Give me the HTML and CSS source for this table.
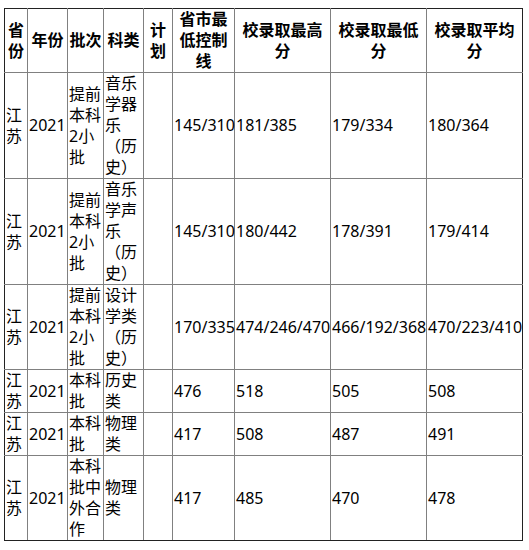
FILE: index.html
```html
<!DOCTYPE html>
<html lang="zh-CN">
<head>
<meta charset="utf-8">
<title>江苏 2021</title>
<link rel="stylesheet" href="styles.css">
</head>
<body>
<div class="page">
<table class="scores">
<colgroup>
<col class="c1"><col class="c2"><col class="c3"><col class="c4"><col class="c5"><col class="c6"><col class="c7"><col class="c8"><col class="c9">
</colgroup>
<thead>
<tr>
<th>省份</th><th>年份</th><th>批次</th><th>科类</th><th>计划</th><th>省市最低控制线</th><th>校录取最高分</th><th>校录取最低分</th><th>校录取平均分</th>
</tr>
</thead>
<tbody>
<tr>
<td>江苏</td><td>2021</td><td>提前本科2小批</td><td>音乐学器乐（历史）</td><td></td><td class="num">145/310</td><td class="num">181/385</td><td class="num">179/334</td><td class="num">180/364</td>
</tr>
<tr>
<td>江苏</td><td>2021</td><td>提前本科2小批</td><td>音乐学声乐（历史）</td><td></td><td class="num">145/310</td><td class="num">180/442</td><td class="num">178/391</td><td class="num">179/414</td>
</tr>
<tr>
<td>江苏</td><td>2021</td><td>提前本科2小批</td><td>设计学类（历史）</td><td></td><td class="num">170/335</td><td class="num">474/246/470</td><td class="num">466/192/368</td><td class="num">470/223/410</td>
</tr>
<tr>
<td>江苏</td><td>2021</td><td>本科批</td><td>历史类</td><td></td><td class="num">476</td><td class="num">518</td><td class="num">505</td><td class="num">508</td>
</tr>
<tr>
<td>江苏</td><td>2021</td><td>本科批</td><td>物理类</td><td></td><td class="num">417</td><td class="num">508</td><td class="num">487</td><td class="num">491</td>
</tr>
<tr>
<td>江苏</td><td>2021</td><td>本科批中外合作</td><td>物理类</td><td></td><td class="num">417</td><td class="num">485</td><td class="num">470</td><td class="num">478</td>
</tr>
</tbody>
</table>
</div>
</body>
</html>
```
FILE: styles.css
```css
html, body {
  margin: 0;
  padding: 0;
  background: #ffffff;
}
.page {
  padding: 8px 4px;
  font-family: "Noto Sans", "Noto Sans CJK SC", sans-serif;
  font-size: 16px;
  color: #000;
  text-spacing-trim: space-all;
}
.scores {
  border-collapse: collapse;
  table-layout: fixed;
  width: 519px;
}
.c1 { width: 23px; }
.c2 { width: 40px; }
.c3 { width: 36px; }
.c4 { width: 40px; }
.c5 { width: 29px; }
.c6 { width: 62px; }
.c7 { width: 96px; }
.c8 { width: 96px; }
.c9 { width: 96px; }
.scores th,
.scores td {
  border: 1px solid #808080;
  padding: 0 1px;
  line-height: 21px;
  vertical-align: middle;
  overflow: visible;
  text-spacing-trim: space-all;
}
.scores th {
  font-weight: bold;
  text-align: center;
}
.scores td {
  text-align: left;
}
.scores td.num {
  white-space: nowrap;
}
.scores thead tr th {
  border-top-color: #222;
}
.scores tr > :first-child {
  border-left-color: #222;
}
.scores tr > :last-child {
  border-right-color: #222;
}
.scores tbody tr:last-child td {
  border-bottom-color: #222;
}
```
